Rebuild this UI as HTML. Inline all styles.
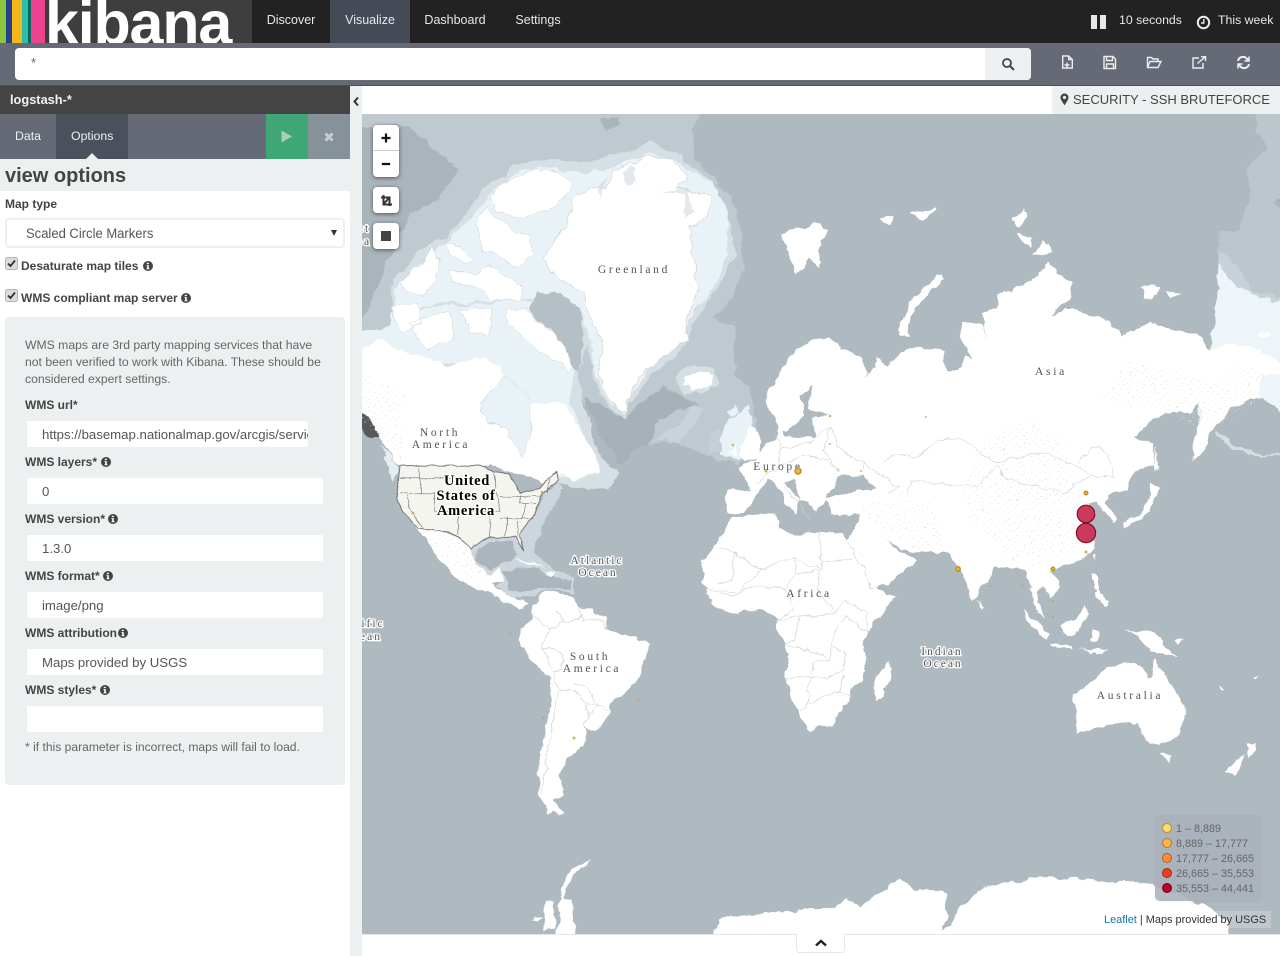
<!DOCTYPE html>
<html lang="en"><head><meta charset="utf-8"><title>Kibana</title>
<style>
html,body{margin:0;padding:0;width:1280px;height:956px;overflow:hidden;background:#ecf0f1;font-family:"Liberation Sans",sans-serif;color:#444}
.a,.t{position:absolute}.t{white-space:nowrap}
.lab{font-size:12px;font-weight:bold;color:#444}
.inp{position:absolute;left:27px;width:281px;height:26px;padding-left:15px;background:#fff;border-radius:2px;font-size:13.2px;line-height:27px;color:#555;white-space:nowrap;overflow:hidden}
.nav{position:absolute;top:0;height:43px;line-height:41px;font-size:12.5px;color:#e8e8e8;text-align:center}
.ctl{position:absolute;left:373px;width:26px;background:#fff;border-radius:4px;box-shadow:0 1px 4px rgba(0,0,0,.55)}
svg text{font-family:"Liberation Serif",serif}
</style></head><body>

<!-- top nav -->
<div class="a" style="left:0;top:0;width:1280px;height:43px;background:#222"></div>
<div class="a" style="left:45px;top:0;width:207px;height:43px;background:#3e3e3e;overflow:hidden"><div class="t" style="left:0;top:-15px;font-size:61px;line-height:76px;font-weight:bold;color:#fff;letter-spacing:-1.2px">kibana</div></div>
<div class="a" style="left:0;top:0;width:6px;height:43px;background:#8cc63f"></div>
<div class="a" style="left:6px;top:0;width:6px;height:43px;background:#27408b"></div>
<div class="a" style="left:12px;top:0;width:10px;height:43px;background:#f5b81c"></div>
<div class="a" style="left:22px;top:0;width:6px;height:43px;background:#2fbcae"></div>
<div class="a" style="left:28px;top:0;width:3px;height:43px;background:#066b5e"></div>
<div class="a" style="left:31px;top:0;width:14px;height:43px;background:#ee4391"></div>
<div class="nav" style="left:252px;width:78px">Discover</div>
<div class="nav" style="left:330px;width:80px;background:#454a57">Visualize</div>
<div class="nav" style="left:410px;width:90px">Dashboard</div>
<div class="nav" style="left:500px;width:76px">Settings</div>
<div class="a" style="left:1091px;top:15px;width:6px;height:14px;background:#e8e8e8"></div>
<div class="a" style="left:1100px;top:15px;width:6px;height:14px;background:#e8e8e8"></div>
<div class="t" style="left:1119px;top:13px;font-size:12.3px;line-height:15px;color:#e8e8e8">10 seconds</div>
<svg class="a" style="left:1196px;top:15px" width="15" height="15" viewBox="0 0 15 15"><circle cx="7.5" cy="7.5" r="5.7" fill="none" stroke="#eee" stroke-width="2"/><path d="M7.8 4v4H5" fill="none" stroke="#eee" stroke-width="1.4"/></svg>
<div class="t" style="left:1218px;top:13px;font-size:12.3px;line-height:15px;color:#e8e8e8">This week</div>

<!-- search bar -->
<div class="a" style="left:0;top:43px;width:1280px;height:42px;background:#656a76"></div>
<div class="a" style="left:0;top:85px;width:1280px;height:1px;background:#4b4f59"></div>
<div class="a" style="left:15px;top:48px;width:1016px;height:32px;background:#fff;border-radius:4px"></div>
<div class="a" style="left:985px;top:48px;width:46px;height:32px;background:#ecf0f1;border-radius:0 4px 4px 0"></div>
<div class="t" style="left:31px;top:55px;font-size:13px;line-height:15px;color:#666">*</div>
<svg class="a" style="left:1001px;top:57px" width="14" height="14" viewBox="0 0 14 14"><circle cx="6" cy="6" r="4" fill="none" stroke="#444" stroke-width="1.800"/><path d="M9 9l3.400 3.400" stroke="#444" stroke-width="2.100" stroke-linecap="round"/></svg>
<svg class="a" style="left:1060px;top:54px" width="195" height="17" viewBox="0 0 195 17" fill="none" stroke="#eceef0" stroke-width="1.400">
<path d="M2.700 2h6l3.600 3.500V14H2.700zM8.700 2v3.500h3.600M7 8.500v5M4.500 11h5"/>
<path d="M44 2.500h9l2.500 2.500v9.500H44zM46.500 2.500v4h6v-4M46.500 14.500V10h7v4.500"/>
<path d="M87.500 13.500V3.500h4l1.500 1.500h5v2.500M87.500 13.500l2.500-6h11l-3 6z"/>
<path d="M139 4h-6v10h10V9M137.500 9.500L145 3M141 2.700h4.500V7"/>
<path d="M178 7a5 5 0 0 1 9-2l1.500 1.500M189 10a5 5 0 0 1-9 2L178.500 10.500" stroke-width="2"/><path d="M189 2.500V7h-4.500M178 14.500V10h4.500" stroke-width="1.500"/>
</svg>

<!-- map region -->
<div class="a" style="left:350px;top:86px;width:12px;height:870px;background:#ecf0f1"></div>
<svg class="a" style="left:352px;top:96px" width="8" height="11" viewBox="0 0 8 11"><path d="M6 1.500L2.500 5.500 6 9.500" fill="none" stroke="#333" stroke-width="2"/></svg>
<div class="a" style="left:362px;top:86px;width:690px;height:28px;background:#fff"></div>
<div class="a" style="left:1052px;top:86px;width:228px;height:28px;background:#ecf0f1;border-radius:0 0 0 4px"></div>
<svg class="a" style="left:1060px;top:93px" width="9" height="13" viewBox="0 0 9 13"><path d="M4.500 .5a4 4 0 0 1 4 4c0 2.500-2.500 5-4 8-1.500-3-4-5.500-4-8a4 4 0 0 1 4-4z" fill="#444"/><circle cx="4.500" cy="4.500" r="1.600" fill="#ecf0f1"/></svg>
<div class="t" style="left:1073px;top:91px;font-size:13px;line-height:17px;color:#444">SECURITY - SSH BRUTEFORCE</div>

<svg class="a" style="left:362px;top:114px" width="918" height="820" viewBox="362 114 918 820">
<defs>
<pattern id="dots" width="7" height="7" patternUnits="userSpaceOnUse"><rect x="1" y="2" width="1" height="1" fill="#e4e2dd"/><rect x="5" y="5" width="1" height="1" fill="#ecebe6"/><rect x="3" y="6" width=".8" height=".8" fill="#dedcd6"/></pattern>
<filter id="rough" filterUnits="userSpaceOnUse" x="330" y="80" width="980" height="890" color-interpolation-filters="sRGB"><feTurbulence type="fractalNoise" baseFrequency=".07" numOctaves="4" seed="7" result="n"/><feDisplacementMap in="SourceGraphic" in2="n" scale="9" xChannelSelector="R" yChannelSelector="G"/></filter>
<filter id="rough2" filterUnits="userSpaceOnUse" x="330" y="80" width="980" height="890" color-interpolation-filters="sRGB"><feTurbulence type="fractalNoise" baseFrequency=".1" numOctaves="3" seed="3" result="n"/><feDisplacementMap in="SourceGraphic" in2="n" scale="3" xChannelSelector="R" yChannelSelector="G"/></filter>
</defs>
<rect x="362" y="114" width="918" height="820" fill="#afb9c0"/>

<g filter="url(#rough)">
<!-- arctic shelves -->
<g transform="translate(360 110) scale(.33333)">
<path fill="#bfc9d0" d="M-60 -60H1050L1000 60 1005 150 1060 200 1110 260 1140 340 1150 480 1100 590 1060 620 1130 650 1120 800 1170 830 1200 1020 1130 1060 1040 1035 960 1000 860 1000 900 920 1020 890 910 825 800 930 700 910 665 870 640 900 -60 900Z"/>
<path fill="#a9b4bb" d="M-60 50H150L240 130 295 180 250 240 240 265 150 310 90 440 5 640 -60 660Z"/>
<path fill="#a6b1b8" d="M672 860L700 870 790 930 905 828 1010 890 900 920 862 1005 780 1060 720 980Z"/>
<path fill="#a9b4bb" d="M715 20H780L770 50 740 60Z"/>
<path fill="#d5dfe4" d="M100 510L180 420 260 380 330 290 380 225 460 170 590 145 690 160 770 130 870 95 950 130 1050 210 1105 310 1125 430 1060 560 1000 640 970 720 880 790 810 880 790 930 745 890 700 800 680 700 660 790 665 860 720 1040 780 1090 740 1140 620 1130 400 1000 -60 900V670L90 660 100 600Z"/>
<path fill="#e9f3f7" d="M115 520L260 400 350 310 400 240 480 180 590 175 680 195 770 165 870 130 960 160 1075 235 1105 320 1100 440 1045 570 1000 600 955 690 880 760 810 850 790 910 750 880 700 780 690 690 660 600 600 555 480 570 300 575 170 590 100 620Z"/>
<path fill="#e9f3f7" d="M-60 680L90 650 100 600 480 570 600 600 650 760 625 880 690 1010 720 1085 560 1120 360 780 120 730 -60 735Z"/>
<path fill="#b5bfc6" d="M530 545L600 545 660 600 670 700 660 790 645 770 590 680 510 600Z"/>
<path fill="#d5dfe4" d="M940 800L990 765 1060 775 1080 820 1030 850 970 850Z"/>
<path fill="#c9d3d9" d="M965 1000L1030 900 1000 890 950 950 880 990Z"/>
<path fill="#e9f3f7" d="M1090 950L1168 880 1195 1025 1130 1050 1080 1030Z"/>
<path fill="#c5d0d6" d="M1090 1020L1040 1030 1050 970 1080 960Z"/>

<!-- Greenland -->
<path fill="#fff" stroke="#ccd3d7" stroke-width="2" d="M550 445L575 400 625 335 640 265 690 235 735 235 760 180 830 160 850 140 925 145 985 205 950 235 1005 250 1060 255 1040 325 990 350 1000 440 1015 530 1000 570 975 640 985 690 945 720 880 765 830 800 805 855 800 905 765 895 735 840 715 790 730 690 690 610 670 550 610 510 570 480Z"/>
<path fill="#cfd8dd" d="M890 250L980 235 1000 300 975 325 975 250ZM810 170L830 210 800 230 790 190ZM715 230L740 200 720 270Z" opacity=".6"/>
<!-- Canada mainland -->
<path fill="#fff" d="M-60 715L5 708 70 690 130 720 175 740 235 750 255 775 310 755 365 740 415 765 430 800 360 880 380 935 440 960 470 1010 490 1040 505 965 510 880 600 880 620 890 660 960 690 1010 720 1085 680 1090 640 1115 600 1095 565 1130 530 1110 480 1100 400 1070 115 1065 65 1000 5 925 -60 900Z"/>
<path fill="#e9f3f7" stroke="#cdd3d6" stroke-width="1.500" d="M362 882L430 800 500 840 510 880 510 960 490 1040 468 1010 440 960 375 930Z"/>
<path fill="#e9f3f7" d="M470 770L550 740 550 800 625 880 600 880 510 840 450 800Z"/>
<path fill="#58595b" d="M-60 890L5 910 30 925 60 985 35 990 5 950 -60 920Z"/>
<path fill="#fff" stroke="#ccd3d7" stroke-width="1.500" d="M385 270L430 215 520 180 600 185 640 220 590 285 510 320 430 320ZM345 340L380 290 430 345 510 385 520 430 480 470 420 440 365 420ZM265 395L300 405 340 460 310 465 270 430ZM120 515L150 475 185 470 210 415 240 440 230 510 190 560 145 540ZM260 480L335 490 385 470 490 530 480 570 395 570 355 530 280 520ZM100 590L170 580 185 640 130 670 105 640ZM150 640L270 600 280 685 205 720 165 680ZM300 595L395 590 385 680 330 665ZM435 600L500 600 590 680 645 770 620 790 610 760 535 720 470 660 440 640Z"/>
<path fill="#fff" d="M965 800L1010 785 1060 795 1050 830 1000 845 975 825Z"/>
<path fill="#fff" d="M1265 375L1310 355 1380 340V470L1350 440 1310 495 1285 440Z"/>
<path fill="#e9f3f7" d="M1100 905L1125 875 1135 905 1115 920Z"/>
</g>

<!-- east arctic shelf -->
<g transform="translate(820 110) scale(.33333)">
<path fill="#bcc6cd" d="M1300 -60H1420V720H1198L1198 370 1260 360 1285 280 1280 170 1340 120 1310 60Z"/>
<path fill="#c8d1d7" d="M1198 425L1240 450 1300 545 1420 570V720H1190Z"/>
<path fill="#edf5f8" d="M1198 460L1250 530 1305 555 1420 590V940L1330 860 1230 890 1150 960 1120 1060 1135 900 1178 700Z"/>
<path fill="#fff" d="M1315 670L1345 660 1345 678 1320 680Z"/>
<path fill="#a9b4bb" d="M1420 230V340L1360 280Z"/>
<path fill="#fff" d="M235 650L280 560 368 490 376 510 300 570 262 640 275 682 245 680ZM578 330L610 295 625 320 600 352ZM590 370L640 385 637 410 605 400ZM640 440L670 390 690 425ZM180 325L222 315 210 350 195 340ZM265 305L345 300 310 335 290 320ZM960 530L1022 530 1012 558 970 565ZM1040 545L1075 555 1050 565ZM-5 345L20 360 0 390Z"/>
</g>

<!-- Gulf & Caribbean shelves -->
<g transform="translate(380 440) scale(.33333)">
<path fill="#ccd6dc" d="M275 320L300 300 350 290 410 285 430 230 470 220 500 150 540 125 550 150 500 230 470 300 460 340 520 390 575 410 585 460 500 450 470 470 430 470 395 470 350 440 360 425 300 400 270 370Z"/>
<path fill="#aab5bc" d="M290 330L340 305 395 300 415 345 385 365 330 385 285 365Z"/>
<path fill="#aab5bc" d="M365 395L440 385 510 400 570 420 575 450 480 445 420 455 385 440Z"/>
<path fill="#e4edf1" d="M-5 15L35 50 60 85 40 120 20 60Z"/>
</g>

<!-- Eurasia -->
<path fill="#fff" d="M765 402L777 377 790 357 810 340 830 337 840 347 863 358 867 373 853 387 863 377 877 367 875 357 887 365 900 353 923 345 943 353 947 370 957 370 967 357 973 360 960 340 963 323 983 327 987 340 980 313 997 307 997 297 1027 283 1033 283 1047 263 1072 283 1070 300 1050 317 1067 310 1073 310 1107 320 1113 327 1123 337 1150 320 1173 330 1203 337 1210 350 1230 343 1260 350 1295 372V378L1262 373 1260 397 1233 407 1217 423 1207 440 1195 463 1193 443 1203 410 1197 402 1190 413 1170 413 1153 417 1135 438 1153 443 1155 463 1133 473 1127 490 1110 495 1107 503 1117 518 1113 522 1108 517 1097 500 1087 501 1095 512 1086 522 1092 538 1093 548 1084 558 1062 566 1050 571 1060 587 1050 600 1043 587 1035 590 1045 620 1038 613 1031 593 1027 573 1017 567 993 567 977 597 972 602 960 567 947 553 917 552 900 550 887 537 897 552 908 555 918 560 900 575 877 590 872 588 847 540 852 533 860 513 850 515 832 515 827 503 825 500 818 513 810 500 800 500 793 480 785 483 800 500 797 507 795 515 785 503 778 487 768 478 755 497 743 513 727 513 725 490 753 490 738 468 755 460 768 443 777 437 777 420 785 437 817 438 812 420 828 415 808 408 808 400 813 385 800 395 803 417 788 433 780 430 775 420Z"/>
<path fill="#afb9c0" d="M827 497L840 475 863 477 877 490 860 490 840 495Z"/>
<path fill="#fff" d="M738 455L752 425 762 440 760 457 745 462ZM728 451L737 444 735 456Z"/>
<path fill="url(#dots)" d="M985 440L1030 420 1060 440 1085 500 1085 550 1050 570 1010 560 970 520 960 490ZM1130 360L1240 390 1200 430 1160 410 1100 400ZM860 500L930 500 945 550 915 550 885 530 860 510Z"/>
<!-- Africa, South America, Antarctica -->
<g transform="translate(500 530) scale(.33333)">
<path fill="#fff" d="M609 90L660 21 699 -39 825 -51 846 -30 840 0 909 15 966 6 1029 9 1040 30 1115 175 1185 195 1160 240 1100 310 1090 330 1095 385 1090 430 1050 490 1040 520 995 585 920 603 905 570 875 500 855 430 865 380 855 340 830 300 835 270 790 235 690 248 650 225 605 165Z"/>
<path fill="#fff" d="M1125 470L1120 510 1145 510 1175 420 1170 395 1130 440Z"/>
<path fill="#fff" d="M95 225L140 185 220 200 240 230 310 260 320 300 400 315 450 345 440 380 410 460 340 510 330 550 290 605 255 590 260 630 215 670 205 690 175 740 190 790 160 810 190 850 140 850 115 790 120 680 150 530 155 450 90 390 60 330 65 290 100 260Z"/>
<path fill="#fff" d="M640 1250V1210L660 1165 720 1160 800 1150 900 1140 1000 1130 1040 1105 1080 1130 1150 1080 1200 1045 1240 1075 1340 1085 1345 1150 1325 1200 1350 1190 1380 1130 1420 1100 1450 1070 1500 1060 1620 1045 1710 1045 1850 1060 1900 1050 2040 1095 2120 1130 2180 1170 2200 1250Z"/>
<path fill="#fff" d="M270 990L215 1015 185 1075 165 1250H230L215 1110 190 1100 225 1030ZM135 1115L160 1115 165 1200 130 1205ZM100 1160L125 1165 100 1175Z"/>
<g fill="none" stroke="#d7d9da" stroke-width="2.500">
<path d="M650 55L700 65 785 120 880 85 960 115V0M960 95H1060M700 65V155H650M785 120L700 200 610 175M880 85L885 130 860 180 780 170 760 170 710 190 650 180M885 130L955 120 955 180 1000 250M860 180L880 240 830 270 900 260 1000 250 1035 210M900 260L890 320 860 340 920 360 990 390 1000 350 1000 300 1030 260 1100 310M990 390L940 400 935 440 855 440M935 440L980 440 1030 420 1040 370 1000 350M930 445L920 530 900 540M925 520L1020 485 1030 430M1020 485L1050 500M1035 210L1100 250 1100 310"/>
<path d="M100 250L150 300 125 350 160 420M170 240L190 280 150 300M190 280L240 260 250 250M240 230L250 270 300 270 320 300M125 350L190 370 190 410 160 430 175 480 220 480 255 520 290 520 265 565M220 460L260 470 290 520 330 540M255 520L265 560 255 590M175 480L150 620 125 790"/>
</g>
</g>

<!-- South Asia & Oceania -->
<g transform="translate(960 530) scale(.33333)">
<path fill="#fff" d="M50 210L70 230 60 237ZM185 240L230 270 272 320 262 335 215 290ZM275 340L340 350 340 360 280 350ZM350 360L450 365 430 375ZM300 285L350 260 370 232 385 250 360 300 320 320 305 310ZM390 300L415 300 410 330 395 335ZM395 130L415 140 412 180 445 215 440 235 410 200ZM490 295L530 310 570 305 620 345 655 380 620 370 570 360 530 320ZM340 490L410 450 430 415 490 390 530 400 570 440 585 385 610 430 660 500 680 545 650 620 600 648 560 630 530 580 480 575 410 595 355 605 340 520ZM605 672L635 675 622 702ZM795 725L855 670 845 710 820 740ZM855 640L890 640 870 680ZM397 75L408 70 400 95ZM640 330L670 325 650 340ZM885 440L905 430 890 445ZM775 470L795 480 790 485Z"/>
</g>
<!-- Japan / Sakhalin, Russia and Central Asia borders -->
<g transform="translate(820 110) scale(.33333)">
<path fill="#fff" d="M1005 1010L1015 1070 1005 1085ZM985 1120L1025 1135 1000 1165 992 1210 950 1230 910 1255 900 1240 960 1215 985 1170Z"/>
<path fill="#d5dde1" d="M1190 965L1250 1010 1330 1035 1420 1025V1035L1320 1040 1240 1020 1195 985Z"/>
<path fill="none" stroke="#d0d3d4" stroke-width="2" d="M30 950L60 1020 130 1060 190 1100 240 1130 210 1150M190 1060L225 1030 290 1045 380 980 440 995 520 1060 560 1045 660 1030 770 1060 810 1100 730 1150 640 1130 560 1100 530 1070 470 1130 350 1120 270 1115 270 1160M810 1100L880 1100 850 1005 810 1015 780 1060M30 950L10 1020 60 1080M-60 1040L10 1040 60 1080M130 1060L130 1090M-190 1120L-130 1070 -60 1040M-130 1070L-110 1010 -30 1000 30 950M-110 1010L-135 970M-110 1130L-60 1180 -30 1230"/>
</g>
<path fill="url(#dots)" d="M1232 360L1270 375 1250 410 1220 420 1190 410ZM410 400L362 420V370Z" opacity=".8"/>
<path fill="url(#dots)" d="M362 375L400 400 402 470 385 440 362 420Z"/>
<!-- Mexico and Central America -->
<g transform="translate(380 440) scale(.33333)">
<path fill="#fff" d="M100 255L200 275 235 290 275 325 290 380 330 400 360 380 365 425 335 425 350 445 395 470 445 490 430 505 385 490 340 465 295 450 240 420 180 370 140 300 120 275Z"/>
<path fill="#fff" d="M400 358L450 368 490 385 450 378ZM495 390L525 395 505 402Z"/>
</g>
<path fill="url(#dots)" d="M418 528L447 532 473 550 477 567 490 575 470 580 445 562Z"/>
</g>

<!-- USA -->
<g filter="url(#rough2)">
<g transform="translate(380 440) scale(.33333)">
<path fill="#f5f5f0" stroke="#777" stroke-width="3" d="M60 77H300L340 95 385 100 410 140 420 160 480 145 505 115 530 95 535 120 485 165 465 220 430 265 420 285 430 335 408 290 350 295 330 290 285 315 275 325 235 290 200 275 115 265 65 210 50 175Z"/>
<g fill="none" stroke="#777" stroke-width="2">
<path d="M60 115H300M115 80L125 160 165 160V215H280M60 160H165M85 165V200L130 265M235 215V285M340 100L360 215 280 215M330 230V290M360 235H460M385 230L375 290M410 240L415 290M360 170H480M420 165V190H470M440 190L425 240M510 115L500 160"/>
</g>
</g>
</g>

<!-- labels -->
<g text-anchor="middle" font-size="11.500" fill="#555" letter-spacing="2.700">
<text x="634" y="273">Greenland</text><text x="440" y="436">North</text><text x="441" y="448">America</text>
<text x="778" y="470">Europe</text><text x="1051" y="375">Asia</text><text x="809" y="597">Africa</text>
<text x="590" y="660">South</text><text x="592" y="672">America</text><text x="1130" y="699">Australia</text>
</g>
<g text-anchor="middle" font-size="11.500" fill="#555" letter-spacing="2" stroke="#fff" stroke-width="2.500" style="paint-order:stroke">
<text x="597" y="564">Atlantic</text><text x="598" y="576">Ocean</text>
<text x="942" y="655">Indian</text><text x="943" y="667">Ocean</text>
<text x="373" y="627">ific</text><text x="371" y="640">ean</text>
<text x="364" y="232">ct</text><text x="364" y="245">ea</text>
</g>
<g text-anchor="middle" font-size="14.500" font-weight="bold" fill="#000" letter-spacing=".7" stroke="#fff" stroke-width="2.500" style="paint-order:stroke">
<text x="467" y="485">United</text><text x="466" y="500">States of</text><text x="466" y="515">America</text>
</g>

<!-- data markers -->
<g fill="#c8a03c" opacity=".8">
<circle cx="733" cy="445" r="1.300"/><circle cx="766" cy="471" r="1.500"/><circle cx="562" cy="490" r="1"/><circle cx="413" cy="513" r="1.300"/><circle cx="542" cy="492" r="1.300"/><circle cx="830" cy="416" r="1.300"/><circle cx="926" cy="417" r="1"/><circle cx="861" cy="471" r="1"/><circle cx="830" cy="444" r="1"/><circle cx="1053" cy="601" r="1"/><circle cx="1053" cy="617" r="1"/><circle cx="1086" cy="552" r="1.500"/><circle cx="574" cy="738" r="1.500"/><circle cx="543" cy="718" r="1"/><circle cx="510" cy="634" r="1"/><circle cx="638" cy="700" r="1"/><circle cx="1182" cy="700" r="1"/><circle cx="990" cy="586" r="1"/><circle cx="1022" cy="586" r="1"/>
</g>
<g fill="#e8b94f" stroke="#c68f1e" stroke-width="1.500">
<circle cx="798" cy="471" r="3"/><circle cx="958" cy="569" r="2.200"/><circle cx="1053" cy="569" r="1.800"/><circle cx="1086" cy="493" r="1.800"/>
</g>
<g fill="#c93a5b" stroke="#8c0a28" stroke-width="1.200">
<circle cx="1086" cy="514" r="8.800"/><circle cx="1086" cy="533" r="9.600"/>
</g>
</svg>

<!-- map controls -->
<div class="ctl" style="top:125px;height:52px"></div>
<div class="a" style="left:373px;top:150px;width:26px;height:1px;background:#ccc"></div>
<svg class="a" style="left:373px;top:125px" width="26" height="52" viewBox="0 0 26 52"><path d="M13 8.500v9M8.500 13h9M8.800 39h8.400" stroke="#111" stroke-width="2.200"/></svg>
<div class="ctl" style="top:187px;height:26px"></div>
<svg class="a" style="left:373px;top:187px" width="26" height="26" viewBox="0 0 26 26"><path d="M10.500 8v9.500H19M8 10.500H16.500V19M16.500 10.500L10.500 17" fill="none" stroke="#333" stroke-width="2"/></svg>
<div class="ctl" style="top:223px;height:26px"></div>
<div class="a" style="left:381px;top:231px;width:10px;height:10px;background:#444"></div>

<!-- legend -->
<div class="a" style="left:1155px;top:816px;width:106px;height:85px;background:rgba(170,178,186,.88);border-radius:5px;box-shadow:0 0 3px rgba(0,0,0,.1)"></div>
<svg class="a" style="left:1155px;top:816px" width="106" height="85" viewBox="0 0 106 85" stroke-width="1">
<circle cx="12" cy="12" r="4.500" fill="#fed976" stroke="#b98f2a"/><circle cx="12" cy="27" r="4.500" fill="#feb24c" stroke="#b4782a"/><circle cx="12" cy="42" r="4.500" fill="#fd8d3c" stroke="#b35e20"/><circle cx="12" cy="57" r="4.500" fill="#f03b20" stroke="#a62a16"/><circle cx="12" cy="72" r="4.500" fill="#bd0026" stroke="#7e0019"/>
</svg>
<div class="t" style="left:1176px;top:822px;font-size:10.800px;line-height:15px;color:#666">1 – 8,889<br>8,889 – 17,777<br>17,777 – 26,665<br>26,665 – 35,553<br>35,553 – 44,441</div>

<!-- attribution -->
<div class="a" style="left:1100px;top:911px;width:171px;height:17px;background:rgba(255,255,255,.22)"></div>
<div class="t" style="left:1104px;top:913px;font-size:10.950px;line-height:15px;color:#333"><span style="color:#0a7ab0">Leaflet</span> | Maps provided by USGS</div>

<!-- bottom strip -->
<div class="a" style="left:362px;top:934px;width:918px;height:22px;background:#fff;border-top:1px solid #e4e8ea;box-sizing:border-box"></div>
<div class="a" style="left:796px;top:934px;width:49px;height:19px;background:#fff;border:1px solid #e4e8ea;border-top:0;border-radius:0 0 4px 4px;box-sizing:border-box"></div>
<svg class="a" style="left:814px;top:938px" width="14" height="10" viewBox="0 0 14 10"><path d="M2 7.500l5-4.500 5 4.500" fill="none" stroke="#222" stroke-width="2.400"/></svg>

<!-- sidebar -->
<div class="a" style="left:0;top:86px;width:350px;height:870px;background:#fff"></div>
<div class="a" style="left:0;top:86px;width:350px;height:28px;background:#444"></div>
<div class="t" style="left:10px;top:92px;font-size:12.800px;line-height:15px;font-weight:bold;color:#f2f2f2">logstash-*</div>
<div class="a" style="left:0;top:114px;width:350px;height:45px;background:#656a76"></div>
<div class="t" style="left:15px;top:129px;font-size:12.300px;line-height:15px;color:#ecf0f1">Data</div>
<div class="a" style="left:56px;top:114px;width:72px;height:45px;background:#4b505d"></div>
<div class="t" style="left:71px;top:129px;font-size:12.300px;line-height:15px;color:#ecf0f1">Options</div>
<div class="a" style="left:86px;top:153px;width:0;height:0;border-left:6px solid transparent;border-right:6px solid transparent;border-bottom:6px solid #ecf0f1"></div>
<div class="a" style="left:266px;top:114px;width:42px;height:45px;background:#3fa776"></div>
<svg class="a" style="left:281px;top:130px" width="12" height="13" viewBox="0 0 12 13"><path d="M.5 .5L11 6.500.5 12.500z" fill="#a8cfb8"/></svg>
<div class="a" style="left:308px;top:114px;width:42px;height:45px;background:#85929a"></div>
<svg class="a" style="left:324px;top:132px" width="10" height="10" viewBox="0 0 10 10"><path d="M1.500 1.500l7 7M8.500 1.500l-7 7" stroke="#c6ced2" stroke-width="2.800"/></svg>
<div class="a" style="left:0;top:159px;width:350px;height:32px;background:#ecf0f1"></div>
<div class="t" style="left:5px;top:163px;font-size:20px;line-height:26px;font-weight:bold;color:#444">view options</div>

<div class="t lab" style="left:5px;top:197px;line-height:15px">Map type</div>
<div class="a" style="left:5px;top:218px;width:340px;height:30px;border:2px solid #ecf0f1;border-radius:4px;box-sizing:border-box;background:#fff"></div>
<div class="t" style="left:26px;top:225px;font-size:14px;line-height:17px;color:#555;transform:scaleX(.93);transform-origin:0 0">Scaled Circle Markers</div>
<div class="a" style="left:331px;top:230px;width:0;height:0;border-left:3px solid transparent;border-right:3px solid transparent;border-top:6px solid #333"></div>

<svg class="a" style="left:5px;top:257px" width="13" height="13" viewBox="0 0 13 13"><rect x=".5" y=".5" width="12" height="12" rx="2" fill="#dcdcdc" stroke="#b5b5b5"/><path d="M3 6.500l2.500 2.500L10 3.500" fill="none" stroke="#333" stroke-width="1.800"/></svg>
<div class="t lab" style="left:21px;top:259px;line-height:15px">Desaturate map tiles</div>
<svg class="a" style="left:143px;top:261px" width="10" height="10" viewBox="0 0 10 10"><circle cx="5" cy="5" r="5" fill="#444"/><path d="M3.800 1.800h2v1.300h-2zM3.500 4.100h2.300v3.100h.7v1H3.500v-1h.7V5.100h-.7z" fill="#fff"/></svg>
<svg class="a" style="left:5px;top:289px" width="13" height="13" viewBox="0 0 13 13"><rect x=".5" y=".5" width="12" height="12" rx="2" fill="#dcdcdc" stroke="#b5b5b5"/><path d="M3 6.500l2.500 2.500L10 3.500" fill="none" stroke="#333" stroke-width="1.800"/></svg>
<div class="t lab" style="left:21px;top:291px;line-height:15px">WMS compliant map server</div>
<svg class="a" style="left:181px;top:293px" width="10" height="10" viewBox="0 0 10 10"><circle cx="5" cy="5" r="5" fill="#444"/><path d="M3.800 1.800h2v1.300h-2zM3.500 4.100h2.300v3.100h.7v1H3.500v-1h.7V5.100h-.7z" fill="#fff"/></svg>

<div class="a" style="left:5px;top:317px;width:340px;height:468px;background:#ecf0f1;border-radius:4px"></div>
<div class="t" style="left:25px;top:337px;font-size:12.200px;line-height:17px;color:#666">WMS maps are 3rd party mapping services that have<br>not been verified to work with Kibana. These should be<br>considered expert settings.</div>
<div class="t lab" style="left:25px;top:398px;line-height:15px">WMS url*</div>
<div class="inp" style="top:421px;width:266px"><span style="display:block;width:267px;overflow:hidden">https://basemap.nationalmap.gov/arcgis/services/USGSTopo</span></div>
<div class="t lab" style="left:25px;top:455px;line-height:15px">WMS layers*</div>
<svg class="a" style="left:101px;top:457px" width="10" height="10" viewBox="0 0 10 10"><circle cx="5" cy="5" r="5" fill="#444"/><path d="M3.800 1.800h2v1.300h-2zM3.500 4.100h2.300v3.100h.7v1H3.500v-1h.7V5.100h-.7z" fill="#fff"/></svg>
<div class="inp" style="top:478px">0</div>
<div class="t lab" style="left:25px;top:512px;line-height:15px">WMS version*</div>
<svg class="a" style="left:108px;top:514px" width="10" height="10" viewBox="0 0 10 10"><circle cx="5" cy="5" r="5" fill="#444"/><path d="M3.800 1.800h2v1.300h-2zM3.500 4.100h2.300v3.100h.7v1H3.500v-1h.7V5.100h-.7z" fill="#fff"/></svg>
<div class="inp" style="top:535px">1.3.0</div>
<div class="t lab" style="left:25px;top:569px;line-height:15px">WMS format*</div>
<svg class="a" style="left:103px;top:571px" width="10" height="10" viewBox="0 0 10 10"><circle cx="5" cy="5" r="5" fill="#444"/><path d="M3.800 1.800h2v1.300h-2zM3.500 4.100h2.300v3.100h.7v1H3.500v-1h.7V5.100h-.7z" fill="#fff"/></svg>
<div class="inp" style="top:592px">image/png</div>
<div class="t lab" style="left:25px;top:626px;line-height:15px">WMS attribution</div>
<svg class="a" style="left:118px;top:628px" width="10" height="10" viewBox="0 0 10 10"><circle cx="5" cy="5" r="5" fill="#444"/><path d="M3.800 1.800h2v1.300h-2zM3.500 4.100h2.300v3.100h.7v1H3.500v-1h.7V5.100h-.7z" fill="#fff"/></svg>
<div class="inp" style="top:649px">Maps provided by USGS</div>
<div class="t lab" style="left:25px;top:683px;line-height:15px">WMS styles*</div>
<svg class="a" style="left:100px;top:685px" width="10" height="10" viewBox="0 0 10 10"><circle cx="5" cy="5" r="5" fill="#444"/><path d="M3.800 1.800h2v1.300h-2zM3.500 4.100h2.300v3.100h.7v1H3.500v-1h.7V5.100h-.7z" fill="#fff"/></svg>
<div class="inp" style="top:706px"></div>
<div class="t" style="left:25px;top:740px;font-size:12.100px;line-height:15px;color:#666">* if this parameter is incorrect, maps will fail to load.</div>
</body></html>
